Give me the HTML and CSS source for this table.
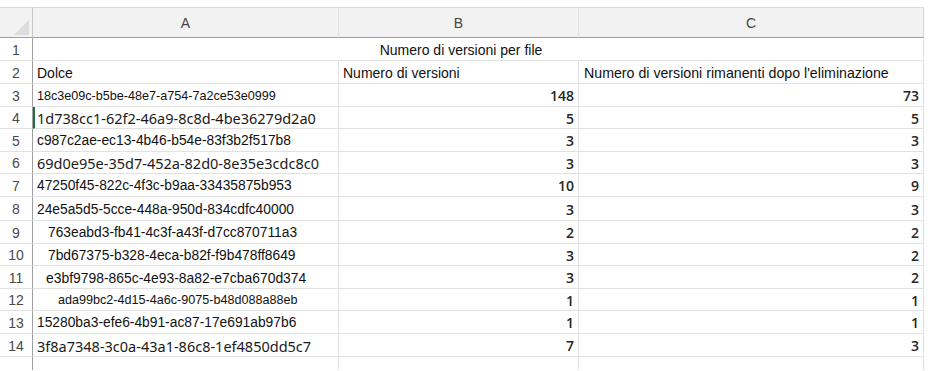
FILE: index.html
```html
<!DOCTYPE html>
<html>
<head>
<meta charset="utf-8">
<link rel="stylesheet" href="styles.css">
</head>
<body>
<div class="sheet">
  <div class="colhdr corner"><span class="tri"></span></div>
  <div class="colhdr">A</div>
  <div class="colhdr">B</div>
  <div class="colhdr last">C</div>

  <div class="rh">1</div>
  <div class="cell merged">Numero di versioni per file</div>

  <div class="rh">2</div>
  <div class="cell txt">Dolce</div>
  <div class="cell txt">Numero di versioni</div>
  <div class="cell txt c">Numero di versioni rimanenti dopo l'eliminazione</div>

  <div class="rh">3</div>
  <div class="cell id sm">18c3e09c-b5be-48e7-a754-7a2ce53e0999</div>
  <div class="cell num">148</div>
  <div class="cell num">73</div>

  <div class="rh">4</div>
  <div class="cell id lg active">1d738cc1-62f2-46a9-8c8d-4be36279d2a0</div>
  <div class="cell num">5</div>
  <div class="cell num">5</div>

  <div class="rh">5</div>
  <div class="cell id md">c987c2ae-ec13-4b46-b54e-83f3b2f517b8</div>
  <div class="cell num">3</div>
  <div class="cell num">3</div>

  <div class="rh">6</div>
  <div class="cell id lg">69d0e95e-35d7-452a-82d0-8e35e3cdc8c0</div>
  <div class="cell num">3</div>
  <div class="cell num">3</div>

  <div class="rh">7</div>
  <div class="cell id md">47250f45-822c-4f3c-b9aa-33435875b953</div>
  <div class="cell num">10</div>
  <div class="cell num">9</div>

  <div class="rh">8</div>
  <div class="cell id md">24e5a5d5-5cce-448a-950d-834cdfc40000</div>
  <div class="cell num">3</div>
  <div class="cell num">3</div>

  <div class="rh">9</div>
  <div class="cell id md ind1">763eabd3-fb41-4c3f-a43f-d7cc870711a3</div>
  <div class="cell num">2</div>
  <div class="cell num">2</div>

  <div class="rh">10</div>
  <div class="cell id md ind1">7bd67375-b328-4eca-b82f-f9b478ff8649</div>
  <div class="cell num">3</div>
  <div class="cell num">2</div>

  <div class="rh">11</div>
  <div class="cell id md ind2">e3bf9798-865c-4e93-8a82-e7cba670d374</div>
  <div class="cell num">3</div>
  <div class="cell num">2</div>

  <div class="rh">12</div>
  <div class="cell id sm ind3">ada99bc2-4d15-4a6c-9075-b48d088a88eb</div>
  <div class="cell num">1</div>
  <div class="cell num">1</div>

  <div class="rh">13</div>
  <div class="cell id md">15280ba3-efe6-4b91-ac87-17e691ab97b6</div>
  <div class="cell num">1</div>
  <div class="cell num">1</div>

  <div class="rh">14</div>
  <div class="cell id lg">3f8a7348-3c0a-43a1-86c8-1ef4850dd5c7</div>
  <div class="cell num">7</div>
  <div class="cell num">3</div>

  <div class="rh tail"></div>
  <div class="cell tail"></div>
  <div class="cell tail"></div>
  <div class="cell tail"></div>
</div>
</body>
</html>
```

FILE: styles.css
```css
html, body {
  margin: 0;
  padding: 0;
  background: #ffffff;
}

body {
  padding-top: 7px;
  font-family: "Liberation Sans", Arial, sans-serif;
  color: #000;
}

.sheet {
  display: grid;
  width: 924px;
  grid-template-columns: 33px 306px 240px 345px;
  grid-template-rows: 31px 23px 23px 23px 22px 23px 22px 23px 24px 23px 22px 23px 22px 23px 23px 13px;
}

.colhdr {
  background: #f2f2f2;
  border-top: 1px solid #d9d9d9;
  border-bottom: 1px solid #9f9f9f;
  border-right: 1px solid #e2e2e2;
  box-sizing: border-box;
  display: flex;
  align-items: center;
  justify-content: center;
  font-size: 14px;
  color: #444;
  padding-top: 1px;
}

.colhdr.last {
  border-right: 1px solid #d4d4d4;
}

.corner {
  position: relative;
  border-right: 1px solid #c8c8c8;
}

.tri {
  position: absolute;
  right: 3px;
  bottom: 2px;
  width: 15px;
  height: 15px;
  background: #dcdcdc;
  clip-path: polygon(100% 0, 100% 100%, 0 100%);
}

.rh {
  box-sizing: border-box;
  border-right: 1px solid #9f9f9f;
  border-bottom: 1px solid #e1e1e1;
  background: #fff;
  display: flex;
  align-items: center;
  justify-content: center;
  font-size: 14px;
  color: #4a4a4a;
  padding-top: 1px;
}

.cell {
  box-sizing: border-box;
  border-right: 1px solid #e1e1e1;
  border-bottom: 1px solid #e1e1e1;
  display: flex;
  align-items: center;
  white-space: nowrap;
  overflow: hidden;
  padding-top: 1px;
}

.merged {
  grid-column: 2 / span 3;
  justify-content: center;
  padding-right: 34px;
  font-size: 14px;
  color: #111;
}

.txt {
  font-size: 14px;
  padding-left: 4px;
  color: #111;
}

.txt.c {
  padding-left: 5px;
  font-size: 14.2px;
}

.id {
  padding-left: 4px;
  color: #111;
}

.id.sm {
  font-size: 12.6px;
}

.id.md {
  font-size: 13.8px;
}

.id.lg {
  font-family: "Noto Sans", "Open Sans", sans-serif;
  font-size: 14.5px;
  color: #1a1a1a;
}

.id.ind1 {
  padding-left: 15px;
}

.id.ind2 {
  padding-left: 13px;
  font-size: 13.9px;
}

.id.ind3 {
  padding-left: 25px;
  font-size: 12.6px;
}

.active {
  border-left: 2px solid #1e7145;
  padding-left: 2px;
}

.num {
  justify-content: flex-end;
  padding-right: 4px;
  font-family: "Open Sans", "Liberation Sans", sans-serif;
  font-weight: 600;
  font-size: 14px;
  color: #262626;
}

.tail {
  border-bottom: none;
}
```
